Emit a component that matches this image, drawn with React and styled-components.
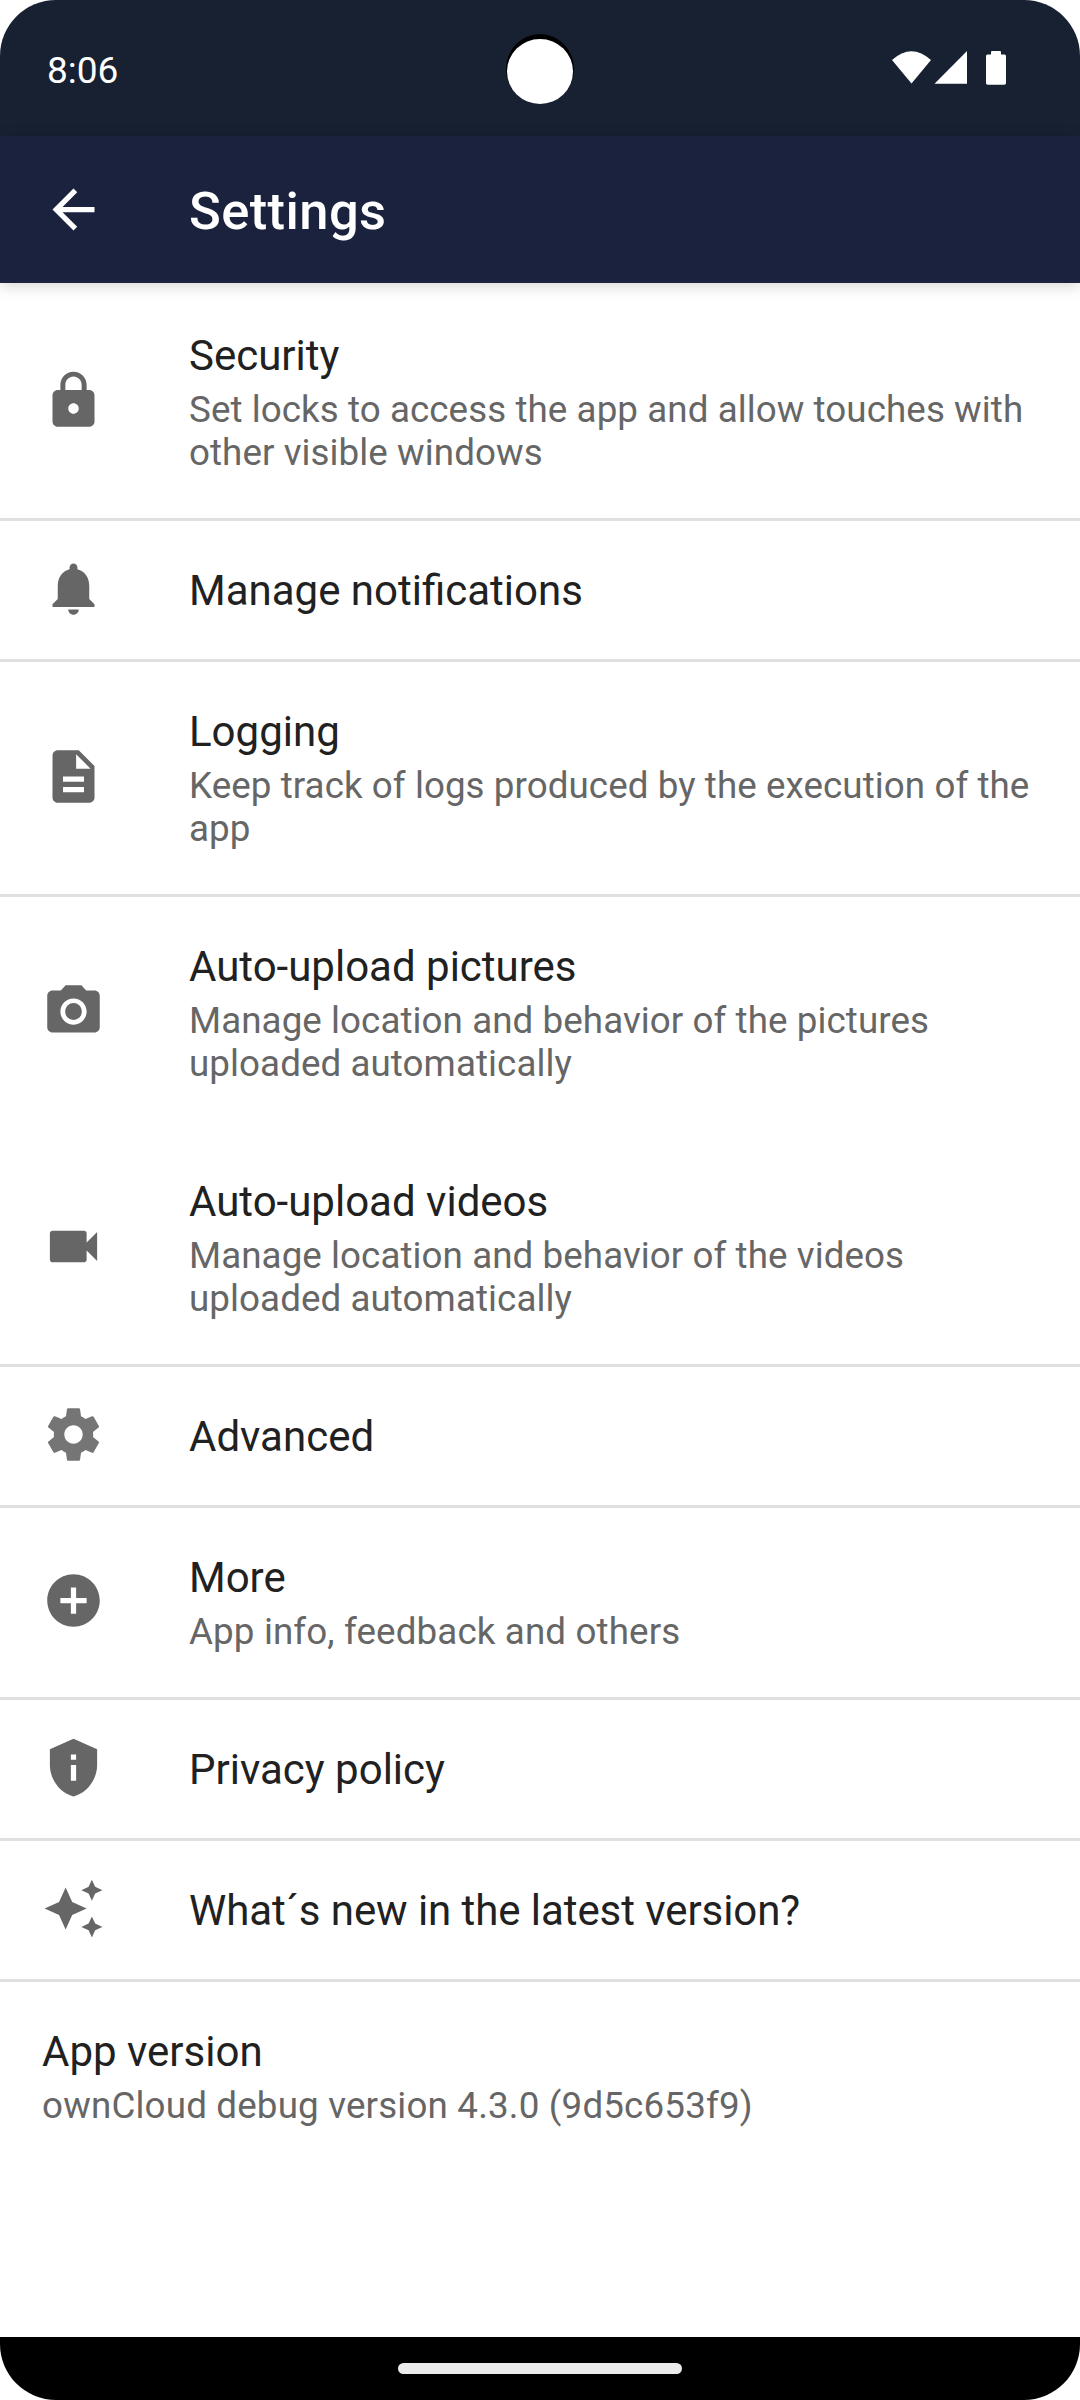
import React from 'react';
import styled, { createGlobalStyle } from 'styled-components';

const GlobalStyle = createGlobalStyle`
  * { box-sizing: border-box; }
  body { margin: 0; background: #fff; font-family: Roboto, "Noto Sans", sans-serif; }
`;

const Screen = styled.div`
  width: 1080px;
  height: 2400px;
  display: flex;
  flex-direction: column;
  overflow: hidden;
  border-radius: 56px;
  background: #fff;
`;

const StatusBar = styled.header`
  position: relative;
  flex: none;
  height: 136px;
  padding: 0 72px 0 47px;
  display: flex;
  align-items: center;
  justify-content: space-between;
  background: #172132;
  color: #fff;
`;

const Clock = styled.span`
  font-size: 37px;
  line-height: 44px;
  padding-top: 6px;
`;

const StatusIcons = styled.svg`
  width: 120px;
  height: 44px;
  fill: #fff;
`;

const CameraHole = styled.div`
  position: absolute;
  top: 34px;
  left: 506px;
  width: 68px;
  height: 70px;
  padding: 5px 1px 0;
  border-radius: 50%;
  background: #000;

  &::after {
    content: '';
    display: block;
    height: 65px;
    border-radius: 50%;
    background: #fff;
  }
`;

const Toolbar = styled.div`
  position: relative;
  flex: none;
  height: 147px;
  padding-left: 42px;
  display: flex;
  align-items: center;
  gap: 84px;
  background: #1b223d;
  color: #fff;
  box-shadow: 0 3px 14px rgba(0, 0, 0, 0.17);
`;

const Title = styled.h1`
  margin: 0;
  padding-top: 3px;
  font-size: 52.5px;
  line-height: 62px;
  font-weight: 500;
  letter-spacing: 0.4px;
`;

const List = styled.main`
  flex: 1;
  display: flex;
  flex-direction: column;
`;

const Row = styled.div`
  flex: none;
  padding: 42px 20px 42px 42px;
  display: flex;
  align-items: center;
  gap: 84px;
  box-shadow: ${(p) => (p.$divided ? 'inset 0 3px 0 #e0e0e0' : 'none')};
`;

const Icon = styled.svg`
  flex: none;
  width: 63px;
  height: 63px;
  margin: ${(p) => (p.$raised ? '-3.5px 0 -2.5px' : '-3px 0')};
  fill: ${(p) => p.$color || '#666'};
`;

const Label = styled.div`
  padding-top: 4px;
  font-size: 42px;
  line-height: 53px;
  letter-spacing: ${(p) => p.$tracking || 'normal'};
  color: #212121;
  white-space: nowrap;
`;

const Summary = styled.div`
  padding: 6px 0 2px;
  font-size: 36.75px;
  line-height: 43px;
  letter-spacing: ${(p) => p.$tracking || '0.07px'};
  color: #666;
  white-space: pre;
`;

const NavBar = styled.footer`
  flex: none;
  height: 63px;
  display: flex;
  align-items: center;
  justify-content: center;
  background: #000;
`;

const Handle = styled.div`
  width: 284px;
  height: 11px;
  border-radius: 6px;
  background: #ebebeb;
`;

const paths = {
  back: 'M20 11H7.83l5.59-5.59L12 4l-8 8 8 8 1.41-1.41L7.83 13H20v-2z',
  lock: 'M18 8h-1V6c0-2.76-2.24-5-5-5S7 3.24 7 6v2H6c-1.1 0-2 .9-2 2v10c0 1.1.9 2 2 2h12c1.1 0 2-.9 2-2V10c0-1.1-.9-2-2-2zm-6 9c-1.1 0-2-.9-2-2s.9-2 2-2 2 .9 2 2-.9 2-2 2zm3.1-9H8.9V6c0-1.71 1.39-3.1 3.1-3.1 1.71 0 3.1 1.39 3.1 3.1v2z',
  bell: 'M12 22c1.1 0 2-.9 2-2h-4c0 1.1.89 2 2 2zm6-6v-5c0-3.07-1.64-5.64-4.5-6.32V4c0-.83-.67-1.5-1.5-1.5s-1.5.67-1.5 1.5v.68C7.63 5.36 6 7.92 6 11v5l-2 2v1h16v-1l-2-2z',
  file: 'M14 2H6c-1.1 0-1.99.9-1.99 2L4 20c0 1.1.89 2 1.99 2H18c1.1 0 2-.9 2-2V8l-6-6zm2 16H8v-2h8v2zm0-4H8v-2h8v2zm-3-5V3.5L18.5 9H13z',
  camera: 'M9 2L7.17 4H4c-1.1 0-2 .9-2 2v12c0 1.1.9 2 2 2h16c1.1 0 2-.9 2-2V6c0-1.1-.9-2-2-2h-3.17L15 2H9zm3 15c-2.76 0-5-2.24-5-5s2.24-5 5-5 5 2.24 5 5-2.24 5-5 5z M15.2 12a3.2 3.2 0 1 1-6.4 0a3.2 3.2 0 1 1 6.4 0z',
  video: 'M17 10.5V7c0-.55-.45-1-1-1H4c-.55 0-1 .45-1 1v10c0 .55.45 1 1 1h12c.55 0 1-.45 1-1v-3.5l4 4v-11l-4 4z',
  gear: 'M19.43 12.98c.04-.32.07-.64.07-.98s-.03-.66-.07-.98l2.11-1.65c.19-.15.24-.42.12-.64l-2-3.46c-.12-.22-.39-.3-.61-.22l-2.49 1c-.52-.4-1.08-.73-1.69-.98l-.38-2.65C14.46 2.18 14.25 2 14 2h-4c-.25 0-.46.18-.49.42l-.38 2.65c-.61.25-1.17.59-1.69.98l-2.49-1c-.23-.09-.49 0-.61.22l-2 3.46c-.13.22-.07.49.12.64l2.11 1.65c-.04.32-.07.65-.07.98s.03.66.07.98l-2.11 1.65c-.19.15-.24.42-.12.64l2 3.46c.12.22.39.3.61.22l2.49-1c.52.4 1.08.73 1.69.98l.38 2.65c.03.24.24.42.49.42h4c.25 0 .46-.18.49-.42l.38-2.65c.61-.25 1.17-.59 1.69-.98l2.49 1c.23.09.49 0 .61-.22l2-3.46c.12-.22.07-.49-.12-.64l-2.11-1.65zM12 15.5c-1.93 0-3.5-1.57-3.5-3.5s1.57-3.5 3.5-3.5 3.5 1.57 3.5 3.5-1.57 3.5-3.5 3.5z',
  plus: 'M12 2C6.48 2 2 6.48 2 12s4.48 10 10 10 10-4.48 10-10S17.52 2 12 2zm5 11h-4v4h-2v-4H7v-2h4V7h2v4h4v2z',
  shield: 'M12 1L3 5v6c0 5.55 3.84 10.74 9 12 5.16-1.26 9-6.45 9-12V5l-9-4zm1 16h-2v-6h2v6zm0-8h-2V7h2v2z',
  stars: 'm19 9 1.25-2.75L23 5l-2.75-1.25L19 1l-1.25 2.75L15 5l2.75 1.25L19 9zm-7.5.5L9 4 6.5 9.5 1 12l5.5 2.5L9 20l2.5-5.5L17 12l-5.5-2.5zM19 15l-1.25 2.75L15 19l2.75 1.25L19 23l1.25-2.75L23 19l-2.75-1.25L19 15z',
};

const Glyph = ({ name, color, raised }) => (
  <Icon viewBox="0 0 24 24" $color={color} $raised={raised}>
    <path d={paths[name]} />
  </Icon>
);

const rows = [
  { icon: 'lock', label: 'Security', summary: 'Set locks to access the app and allow touches with\nother visible windows' },
  { icon: 'bell', label: 'Manage notifications', divided: true },
  { icon: 'file', label: 'Logging', summary: 'Keep track of logs produced by the execution of the\napp', divided: true },
  { icon: 'camera', label: 'Auto-upload pictures', summary: 'Manage location and behavior of the pictures\nuploaded automatically', divided: true },
  { icon: 'video', label: 'Auto-upload videos', summary: 'Manage location and behavior of the videos\nuploaded automatically' },
  { icon: 'gear', color: '#757575', label: 'Advanced', divided: true },
  { icon: 'plus', raised: true, label: 'More', summary: 'App info, feedback and others', summaryTracking: '0.13px', divided: true },
  { icon: 'shield', label: 'Privacy policy', divided: true },
  { icon: 'stars', label: 'What´s new in the latest version?', labelTracking: '-0.07px', divided: true },
  { label: 'App version', summary: 'ownCloud debug version 4.3.0 (9d5c653f9)', summaryTracking: '0.17px', divided: true },
];

export default function App() {
  return (
    <>
      <GlobalStyle />
      <Screen>
        <StatusBar>
          <Clock>8:06</Clock>
          <CameraHole />
          <StatusIcons viewBox="888 46 120 44">
            <path d="M892 60Q911.5 42.5 931 60L911.5 83.5Z" />
            <path d="M967 51V83.7H934.5Z" />
            <path d="M993 51h7q1 0 1 1v2.5h3.500q1.500 0 1.500 1.500v27q0 1.700-1.700 1.700h-16.600q-1.700 0-1.700-1.700v-27q0-1.500 1.500-1.500h3.500v-2.500q0-1 1-1z" />
          </StatusIcons>
        </StatusBar>
        <Toolbar>
          <Glyph name="back" color="#fff" />
          <Title>Settings</Title>
        </Toolbar>
        <List>
          {rows.map((row) => (
            <Row key={row.label} $divided={row.divided}>
              {row.icon && <Glyph name={row.icon} color={row.color} raised={row.raised} />}
              <div>
                <Label $tracking={row.labelTracking}>{row.label}</Label>
                {row.summary && <Summary $tracking={row.summaryTracking}>{row.summary}</Summary>}
              </div>
            </Row>
          ))}
        </List>
        <NavBar>
          <Handle />
        </NavBar>
      </Screen>
    </>
  );
}
